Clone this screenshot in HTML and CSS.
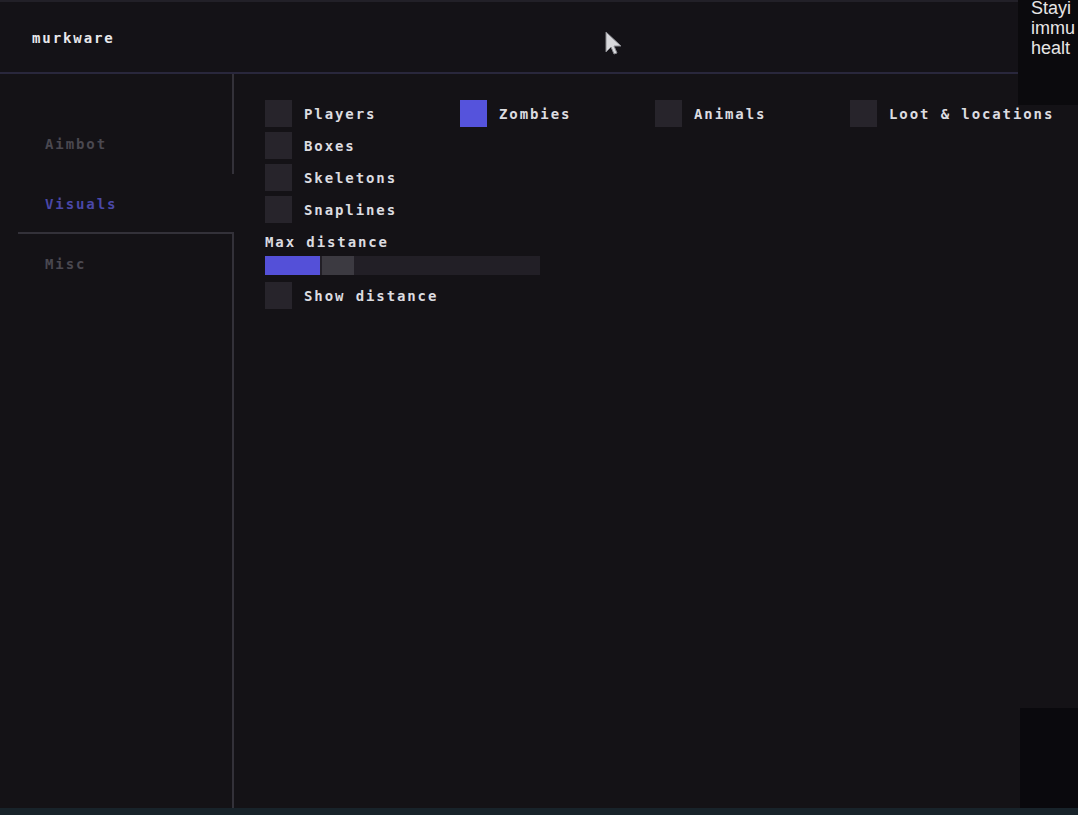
FILE: index.html
```html
<!DOCTYPE html>
<html>
<head>
<meta charset="utf-8">
<link rel="stylesheet" href="styles.css">
</head>
<body>
<div class="window">
  <header class="header"><span class="title">murkware</span></header>
  <div class="main">
    <nav class="sidebar">
      <div class="side-spacer"></div>
      <div class="tab">Aimbot</div>
      <div class="tab active">Visuals</div>
      <div class="tab">Misc</div>
      <div class="side-fill"></div>
    </nav>
    <section class="content">
      <div class="row grid4">
        <label class="check"><span class="box"></span><span>Players</span></label>
        <label class="check"><span class="box on"></span><span>Zombies</span></label>
        <label class="check"><span class="box"></span><span>Animals</span></label>
        <label class="check"><span class="box"></span><span>Loot &amp; locations</span></label>
      </div>
      <label class="check row"><span class="box"></span><span>Boxes</span></label>
      <label class="check row"><span class="box"></span><span>Skeletons</span></label>
      <label class="check row"><span class="box"></span><span>Snaplines</span></label>
      <div class="slider-label">Max distance</div>
      <div class="slider"><span class="fill"></span><span class="grab"></span></div>
      <label class="check row last"><span class="box"></span><span>Show distance</span></label>
    </section>
  </div>
</div>
<div class="bottom-strip"></div>
<div class="overlay-top">Stayi<br>immu<br>healt</div>
<div class="overlay-bottom"></div>
<svg class="cursor" width="22" height="28" viewBox="0 0 22 28">
  <path d="M2 2 L2 22 L7 17 L10 24 L13 23 L10 16 L17 16 Z" fill="#d8d8dc" stroke="#8a8a90" stroke-width="1"/>
</svg>
</body>
</html>
```
FILE: styles.css
```css
html, body {
  margin: 0;
  padding: 0;
}
body {
  width: 1078px;
  height: 815px;
  overflow: hidden;
  background: #131116;
  position: relative;
  font-family: "DejaVu Sans Mono", "Liberation Mono", monospace;
  font-weight: bold;
  font-size: 14px;
  letter-spacing: 1.9px;
  color: #dcdce0;
}
.window {
  height: 808px;
  display: flex;
  flex-direction: column;
  background: #141216;
  border-top: 2px solid #222028;
  box-sizing: border-box;
}
.header {
  height: 70px;
  flex: none;
  display: flex;
  align-items: center;
  padding-left: 32px;
  border-bottom: 2px solid #29273c;
  background: #141217;
}
.title {
  color: #e8e8ec;
  margin-top: 2px;
}
.main {
  flex: 1;
  display: flex;
}
.sidebar {
  width: 234px;
  flex: none;
  display: flex;
  flex-direction: column;
}
.side-spacer {
  height: 40px;
  border-right: 2px solid #333139;
}
.tab {
  height: 60px;
  box-sizing: border-box;
  display: flex;
  align-items: center;
  padding-left: 45px;
  color: #4a4850;
  border-right: 2px solid #333139;
}
.tab.active {
  color: #4a48a8;
  border-right: none;
  border-bottom: 2px solid #333139;
  margin-left: 18px;
  padding-left: 27px;
  padding-top: 2px;
}
.side-fill {
  flex: 1;
  border-right: 2px solid #333139;
}
.content {
  flex: 1;
  padding: 26px 0 0 31px;
  display: flex;
  flex-direction: column;
  white-space: nowrap;
}
.row {
  height: 27px;
  margin-bottom: 5px;
}
.grid4 {
  display: grid;
  grid-template-columns: repeat(4, 195px);
}
.check {
  display: flex;
  align-items: center;
  gap: 12px;
}
.box {
  width: 27px;
  height: 27px;
  flex: none;
  background: #27242b;
}
.box.on {
  background: #5553dc;
}
.slider-label {
  margin-top: 5px;
  height: 18px;
  line-height: 18px;
}
.slider {
  margin-top: 5px;
  width: 275px;
  height: 19px;
  background: #221f26;
  display: flex;
}
.fill {
  width: 55px;
  background: #5450d8;
}
.grab {
  width: 32px;
  margin-left: 2px;
  background: #3c3a41;
}
.last {
  margin-top: 7px;
}
.bottom-strip {
  height: 7px;
  background: #18232a;
}
.overlay-top {
  position: absolute;
  right: 0;
  top: -2px;
  width: 47px;
  height: 107px;
  padding-left: 13px;
  background: #0b0a0d;
  font-family: "Liberation Sans", Arial, sans-serif;
  font-weight: normal;
  font-size: 18px;
  line-height: 20px;
  letter-spacing: 0;
  color: #e6e6e6;
  overflow: hidden;
  white-space: nowrap;
}
.overlay-bottom {
  position: absolute;
  right: 0;
  top: 708px;
  width: 58px;
  height: 100px;
  background: #0a090d;
}
.cursor {
  position: absolute;
  left: 604px;
  top: 30px;
  filter: blur(0.6px);
}
```
